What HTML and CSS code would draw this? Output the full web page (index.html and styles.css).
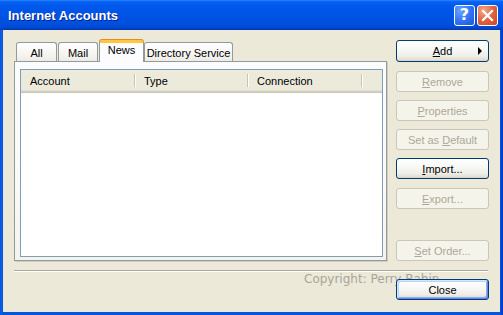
FILE: index.html
```html
<!DOCTYPE html>
<html>
<head>
<meta charset="utf-8">
<link rel="stylesheet" href="styles.css">
</head>
<body>
<div class="window">
  <div class="titlebar">
    <span class="title">Internet Accounts</span>
    <span class="tb-btn help">?</span>
    <span class="tb-btn close">
      <svg width="13" height="13" viewBox="0 0 13 13"><path d="M2 2 L11 11 M11 2 L2 11" stroke="#fff" stroke-width="2.2" stroke-linecap="square"/></svg>
    </span>
  </div>
  <div class="client">
    <div class="main">
      <div class="tabctl">
        <div class="tabs">
          <div class="tab t-all">All</div>
          <div class="tab t-mail">Mail</div>
          <div class="tab t-news sel">News</div>
          <div class="tab t-dir">Directory Service</div>
        </div>
        <div class="panel">
          <div class="listview">
            <div class="header">
              <div class="col c1">Account</div>
              <div class="col c2">Type</div>
              <div class="col c3">Connection</div>
              <div class="col c4"></div>
            </div>
          </div>
        </div>
      </div>
      <div class="buttons">
        <div class="btn add"><span></span><span><u>A</u>dd</span><span class="arrow"></span></div>
        <div class="btn disabled b-remove"><span><u>R</u>emove</span></div>
        <div class="btn disabled b-props"><span><u>P</u>roperties</span></div>
        <div class="btn disabled b-def"><span>Set as <u>D</u>efault</span></div>
        <div class="btn b-import"><span><u>I</u>mport...</span></div>
        <div class="btn disabled b-export"><span><u>E</u>xport...</span></div>
        <div class="btn disabled b-order"><span><u>S</u>et Order...</span></div>
      </div>
    </div>
    <div class="separator"></div>
    <div class="bottom">
      <span class="copyright">Copyright: Perry Babin</span>
      <div class="btn default b-close"><span>Close</span></div>
    </div>
  </div>
</div>
</body>
</html>
```

FILE: styles.css
```css
html, body {
  margin: 0;
  padding: 0;
  width: 503px;
  height: 315px;
  overflow: hidden;
  background: #0831d9;
}

.window {
  width: 503px;
  height: 315px;
  display: flex;
  flex-direction: column;
  background: linear-gradient(to right, #0040d8 0, #166aee 1px, #0855dd 2px, #0855dd 500px, #0040c8 502px);
  font-family: "Liberation Sans", Arial, sans-serif;
  font-size: 11px;
  color: #000;
}

.titlebar {
  height: 30px;
  flex: none;
  display: flex;
  align-items: center;
  padding: 0 5px 0 8px;
  box-sizing: border-box;
  background: linear-gradient(to bottom, #3d8dff 0, #0b68f7 1px, #0260f2 3px, #0058ec 6px, #0054e6 12px, #0052e2 18px, #0050dd 24px, #004bd6 27px, #003fc0 29px, #0036b0 30px);
}

.title {
  flex: 1;
  font-family: "Liberation Sans", Arial, sans-serif;
  font-weight: bold;
  font-size: 13px;
  color: #fff;
  text-shadow: 1px 1px 0 #0a1e8c;
  padding-top: 1px;
}

.tb-btn {
  width: 21px;
  height: 21px;
  box-sizing: border-box;
  border: 1px solid #fff;
  border-radius: 3px;
  display: flex;
  align-items: center;
  justify-content: center;
  margin-left: 2px;
}

.help {
  background: radial-gradient(circle at 30% 25%, #6aa6ff 0, #2f72f2 55%, #1f56d8 100%);
  color: #fff;
  font-family: "DejaVu Sans", sans-serif;
  font-weight: bold;
  font-size: 16px;
  line-height: 1;
}

.close {
  background: radial-gradient(circle at 30% 25%, #f6a88a 0, #e2633f 50%, #cc4520 100%);
}

.client {
  flex: 1;
  margin: 0 3px 3px 3px;
  background: #ece9d8;
  padding: 10px 11px 0 11px;
  display: flex;
  flex-direction: column;
}

.main {
  display: flex;
  gap: 9px;
  height: 221px;
}

.tabctl {
  width: 373px;
  display: flex;
  flex-direction: column;
}

.tabs {
  height: 21px;
  display: flex;
  align-items: flex-end;
  padding-left: 2px;
  position: relative;
  z-index: 1;
}

.tab {
  height: 19px;
  box-sizing: border-box;
  border: 1px solid #919b9c;
  border-bottom: none;
  border-radius: 3px 3px 0 0;
  background: linear-gradient(#ffffff, #f6f5f1 60%, #ecebe5);
  display: flex;
  align-items: center;
  justify-content: center;
  padding-top: 1px;
}

.t-all { width: 41px; }
.t-mail { width: 40px; margin-left: 1px; }
.t-news { width: 45px; margin-left: 1px; }
.t-dir { width: 89px; }

.tab.sel {
  height: 22px;
  margin-bottom: -1px;
  background: #fcfcfe;
  border-top: 3px solid #ffc83c;
  box-shadow: 0 -1px 0 #e68b2c;
  align-items: flex-start;
  padding-top: 1px;
}

.panel {
  flex: 1;
  border: 1px solid #919b9c;
  box-shadow: 1px 1px 0 #d0cebf;
  background: linear-gradient(#fcfcfe, #fafaf8 60%, #f4f3ee);
  padding: 7px 3px 3px 5px;
  display: flex;
}

.listview {
  flex: 1;
  border: 1px solid #7f9db9;
  background: #fff;
}

.header {
  height: 23px;
  box-sizing: border-box;
  display: flex;
  background: #ebeadb;
  border-bottom: 1px solid #cbc7b8;
  box-shadow: 0 -1px 0 #d6d2c2 inset, 0 -2px 0 #e2decd inset;
}

.col {
  display: flex;
  align-items: center;
  padding-left: 9px;
  box-sizing: border-box;
  height: 100%;
  position: relative;
  padding-bottom: 1px;
}

.col::after {
  content: "";
  position: absolute;
  right: 0;
  top: 4px;
  bottom: 5px;
  width: 1px;
  background: #c7c5b2;
  box-shadow: 1px 0 0 #fff;
}

.c1 { width: 114px; }
.c2 { width: 113px; }
.c3 { width: 114px; }
.c4 { flex: 1; }
.c4::after { display: none; }

.buttons {
  width: 93px;
  display: flex;
  flex-direction: column;
}

.btn {
  height: 21px;
  box-sizing: border-box;
  border: 1px solid #003c74;
  border-radius: 3px;
  background: linear-gradient(#ffffff, #f7f7f4 45%, #efeee8 75%, #e3e0d4 92%, #d6d0c5);
  display: flex;
  align-items: center;
  justify-content: center;
  color: #000;
  flex: none;
}

.btn u { text-decoration: underline; text-underline-offset: 1px; }

.btn.disabled {
  border-color: #c9c7ba;
  background: #f5f4ea;
  color: #aca899;
}

.add {
  display: grid;
  grid-template-columns: 1fr auto 1fr;
  align-items: center;
  height: 22px;
}

.arrow {
  justify-self: end;
  margin-right: 6px;
  width: 0;
  height: 0;
  border-top: 4px solid transparent;
  border-bottom: 4px solid transparent;
  border-left: 4px solid #000;
}

.b-remove { margin-top: 9px; }
.b-props { margin-top: 8px; }
.b-def { margin-top: 8px; }
.b-import { margin-top: 8px; }
.b-export { margin-top: 9px; }
.b-order { margin-top: auto; }

.separator {
  margin-top: 9px;
  border-top: 1px solid #aca899;
  border-bottom: 1px solid #fff;
  margin-right: 1px;
  height: 0;
}

.bottom {
  margin-top: 7px;
  display: flex;
  justify-content: flex-end;
  position: relative;
}

.copyright {
  position: absolute;
  left: 290px;
  top: -7px;
  font-family: "DejaVu Sans", Verdana, sans-serif;
  font-size: 12px;
  color: #a7a59c;
  z-index: 0;
}

.b-close {
  width: 93px;
  position: relative;
  z-index: 1;
  box-shadow: inset 1px 1px 0 #cee7ff, inset -1px -1px 0 #6982ee, inset 2px 2px 0 #bcd4f6, inset -2px -2px 0 #89adf4;
}
```
